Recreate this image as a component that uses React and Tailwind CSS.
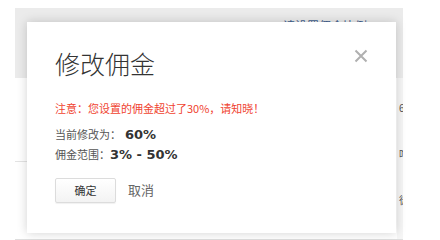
import { useState } from "react"

// Background page that sits behind the dialog
function BackgroundPage() {
  return (
    <div className="ml-[15px] mt-[8px] w-[388px] h-[232px] flex flex-col">
      <div className="h-[70px] bg-[#ebebeb] flex justify-end pr-[36px] pt-[10px]">
        <span className="text-[12px] leading-[16px] text-[#3f5f8f]">请设置佣金比例</span>
      </div>
      <div className="flex-1 flex">
        <div className="w-[12px] flex flex-col">
          <div className="h-[84px] border-b border-[#e3e3e3]" />
        </div>
        <div className="flex-1" />
        <div className="w-[6px] overflow-hidden flex flex-col bg-[#f6f6f6] text-[10px] leading-[14px] text-[#555] pl-[2px]">
          <div className="h-[23px] shrink-0" />
          <span className="whitespace-nowrap">6</span>
          <div className="h-[32px] shrink-0" />
          <span className="whitespace-nowrap">咁</span>
          <div className="h-[32px] shrink-0" />
          <span className="whitespace-nowrap">徒</span>
        </div>
      </div>
      <div className="h-px bg-[#dedede]" />
    </div>
  )
}

export default function App() {
  const [open, setOpen] = useState(true)

  return (
    <div className="relative w-[440px] h-[240px] bg-white overflow-hidden font-['Noto_Sans_CJK_SC','Microsoft_YaHei',sans-serif]">
      <BackgroundPage />

      {open && (
        <div className="absolute left-[27px] top-[22px] w-[369px] h-[211px] bg-white shadow-[0_0_10px_rgba(0,0,0,0.18)] pl-[28px] pr-[28px] pt-[24px]">
          <button
            onClick={() => setOpen(false)}
            className="absolute right-[28px] top-[27px] w-[14px] h-[14px]"
          >
            <svg viewBox="0 0 14 14" className="w-[14px] h-[14px]">
              <path d="M1.5 1.5 L12.5 12.5 M12.5 1.5 L1.5 12.5" stroke="#b0b0b0" strokeWidth="2" />
            </svg>
          </button>

          <h2 className="text-[25px] leading-[34px] font-light text-[#333]">修改佣金</h2>

          <p className="mt-[20px] text-[11px] leading-[16px] text-[#f0432f]">
            注意：您设置的佣金超过了30%，请知晓！
          </p>

          <div className="mt-[8px] text-[11px] text-[#555] leading-[20px]">
            <div className="flex items-baseline h-[20px]">
              当前修改为：
              <b className="ml-[4px] font-['DejaVu_Sans',sans-serif] text-[13px] font-bold text-[#333]">60%</b>
            </div>
            <div className="flex items-baseline h-[20px]">
              佣金范围：
              <b className="font-['DejaVu_Sans',sans-serif] text-[13px] font-bold text-[#333]">3% - 50%</b>
            </div>
          </div>

          <div className="mt-[14px] flex items-center gap-[12px]">
            <button className="w-[61px] h-[25px] border border-[#dcdcdc] rounded-[2px] bg-gradient-to-b from-white to-[#f3f3f3] text-[11px] text-[#333] shadow-[0_1px_1px_rgba(0,0,0,0.06)]">
              确定
            </button>
            <button onClick={() => setOpen(false)} className="text-[13px] text-[#666] -mt-[2px]">
              取消
            </button>
          </div>
        </div>
      )}
    </div>
  )
}
